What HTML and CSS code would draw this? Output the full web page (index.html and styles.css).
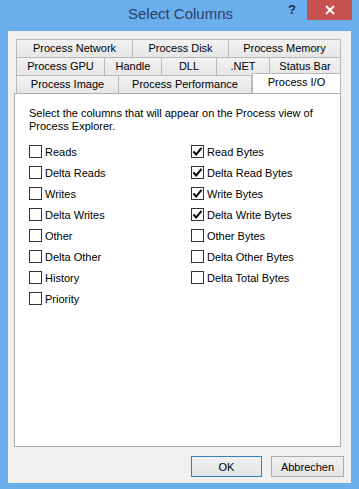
FILE: index.html
```html
<!DOCTYPE html>
<html lang="en">
<head>
<meta charset="UTF-8">
<title>Select Columns</title>
<link rel="stylesheet" href="styles.css">
</head>
<body>
<div class="window">
    <div class="titlebar">
        <span class="title">Select Columns</span>
        <span class="help">?</span>
        <span class="close">
            <svg width="10" height="10" viewBox="0 0 10 10"><path d="M1 1L9 9M9 1L1 9" stroke="#fff" stroke-width="1.8"/></svg>
        </span>
    </div>

    <div class="client">
        <div class="tabs">
            <div class="tab-row">
                <div class="tab w117">Process Network</div>
                <div class="tab w96">Process Disk</div>
                <div class="tab w112">Process Memory</div>
            </div>
            <div class="tab-row">
                <div class="tab w89">Process GPU</div>
                <div class="tab w57">Handle</div>
                <div class="tab w55">DLL</div>
                <div class="tab w53">.NET</div>
                <div class="tab w71">Status Bar</div>
            </div>
            <div class="tab-row">
                <div class="tab w103">Process Image</div>
                <div class="tab w133">Process Performance</div>
                <div class="tab w89 active">Process I/O</div>
            </div>
        </div>

        <div class="panel">
            <p class="intro">Select the columns that will appear on the Process view of Process Explorer.</p>

            <div class="columns">
                <!-- left column -->
                <div class="col">
                    <label class="check"><span class="box"></span>Reads</label>
                    <label class="check"><span class="box"></span>Delta Reads</label>
                    <label class="check"><span class="box"></span>Writes</label>
                    <label class="check"><span class="box"></span>Delta Writes</label>
                    <label class="check"><span class="box"></span>Other</label>
                    <label class="check"><span class="box"></span>Delta Other</label>
                    <label class="check"><span class="box"></span>History</label>
                    <label class="check"><span class="box"></span>Priority</label>
                </div>
                <!-- right column -->
                <div class="col right">
                    <label class="check"><span class="box"><svg width="11" height="11" viewBox="0 0 11 11"><path d="M1.5 5.5L4.2 8.5L9.5 1.8" fill="none" stroke="#000" stroke-width="2"/></svg></span>Read Bytes</label>
                    <label class="check"><span class="box"><svg width="11" height="11" viewBox="0 0 11 11"><path d="M1.5 5.5L4.2 8.5L9.5 1.8" fill="none" stroke="#000" stroke-width="2"/></svg></span>Delta Read Bytes</label>
                    <label class="check"><span class="box"><svg width="11" height="11" viewBox="0 0 11 11"><path d="M1.5 5.5L4.2 8.5L9.5 1.8" fill="none" stroke="#000" stroke-width="2"/></svg></span>Write Bytes</label>
                    <label class="check"><span class="box"><svg width="11" height="11" viewBox="0 0 11 11"><path d="M1.5 5.5L4.2 8.5L9.5 1.8" fill="none" stroke="#000" stroke-width="2"/></svg></span>Delta Write Bytes</label>
                    <label class="check"><span class="box"></span>Other Bytes</label>
                    <label class="check"><span class="box"></span>Delta Other Bytes</label>
                    <label class="check"><span class="box"></span>Delta Total Bytes</label>
                </div>
            </div>
        </div>

        <div class="buttons">
            <button class="btn default">OK</button>
            <button class="btn">Abbrechen</button>
        </div>
    </div>
</div>
</body>
</html>
```

FILE: styles.css
```css
body {
margin: 0;
padding: 0;
font-family: "Liberation Sans", Arial, sans-serif;
font-size: 11px;
color: #000;
}
.window {
width: 359px;
height: 489px;
background: #6aaeee;
display: flex;
flex-direction: column;
}
.titlebar {
height: 31px;
display: flex;
align-items: flex-start;
position: relative;
}
.title {
flex: 1;
text-align: center;
font-size: 15px;
line-height: 28px;
color: #2a4263;
padding-left: 2px;
}
.help {
position: absolute;
left: 288px;
top: 2px;
font-weight: bold;
font-size: 13px;
color: #172d4e;
}
.close {
position: absolute;
left: 307px;
top: 0;
width: 45px;
height: 20px;
background: #c75050;
display: flex;
align-items: center;
justify-content: center;
}
.client {
margin: 0 8px 6px 8px;
height: 452px;
background: #f0f0f0;
padding: 8px 10px 0 6px;
box-sizing: border-box;
display: flex;
flex-direction: column;
}
.tabs {
margin-left: 2px;
}
.tab-row {
display: flex;
height: 18px;
}
.tab {
box-sizing: border-box;
height: 18px;
border: 1px solid #b9b9b9;
border-left: none;
border-bottom: none;
background: linear-gradient(#f2f2f2, #e6e6e6);
text-align: center;
line-height: 16px;
}
.tab:first-child {
border-left: 1px solid #b9b9b9;
}
.tab.active {
background: #fff;
height: 20px;
margin-top: -2px;
margin-bottom: -1px;
border-left: 1px solid #b9b9b9;
line-height: 17px;
position: relative;
z-index: 1;
}
.w53 { width: 53px; }
.w55 { width: 55px; }
.w57 { width: 57px; }
.w71 { width: 71px; }
.w89 { width: 89px; }
.w96 { width: 96px; }
.w103 { width: 103px; }
.w112 { width: 112px; }
.w117 { width: 117px; }
.w133 { width: 133px; }
.panel {
height: 354px;
box-sizing: border-box;
background: #fff;
border: 1px solid #adadad;
padding: 13px 14px 0 14px;
}
.intro {
margin: 0 0 8px 0;
line-height: 13px;
width: 290px;
}
.columns {
display: flex;
}
.col {
width: 162px;
display: flex;
flex-direction: column;
}
.col.right {
width: auto;
flex: 1;
}
.check {
height: 21px;
display: flex;
align-items: center;
}
.box {
width: 13px;
height: 13px;
box-sizing: border-box;
border: 1px solid #333;
background: #fff;
margin-right: 3px;
display: flex;
align-items: center;
justify-content: center;
}
.buttons {
display: flex;
justify-content: flex-end;
gap: 9px;
margin-top: 9px;
margin-right: -3px;
}
.btn {
width: 73px;
height: 21px;
box-sizing: border-box;
border: 1px solid #acacac;
background: linear-gradient(#f0f0f0, #e5e5e5);
font-family: "Liberation Sans", Arial, sans-serif;
font-size: 11px;
color: #000;
padding: 0;
}
.btn.default {
border-color: #3c7fb1;
width: 71px;
}
```
